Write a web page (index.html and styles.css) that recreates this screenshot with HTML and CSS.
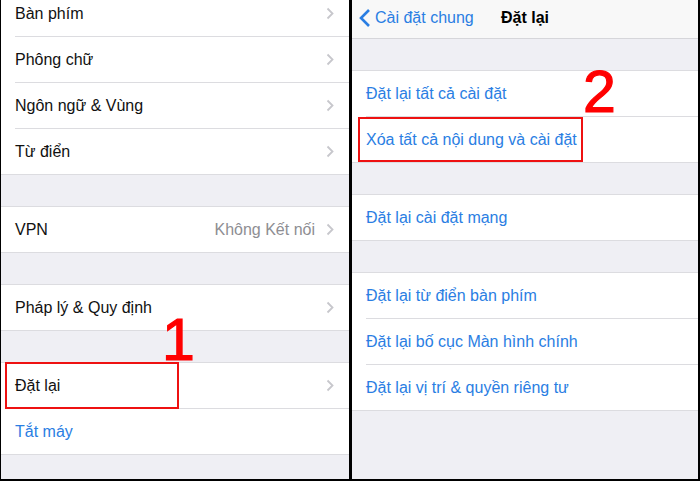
FILE: index.html
```html
<!DOCTYPE html>
<html lang="vi">
<head>
    <meta charset="UTF-8">
    <meta name="viewport" content="width=device-width, initial-scale=1.0">
    <title>Đặt lại</title>
    <link rel="stylesheet" href="styles.css">
</head>
<body>
    <div class="screens">
        <!-- Left screen: Cài đặt chung -->
        <div class="panel">
            <div class="group first">
                <div class="row"><div class="row-inner"><span>Bàn phím</span><svg class="chev" viewBox="0 0 8 13"><polyline points="1.5,1.5 6.5,6.5 1.5,11.5"/></svg></div></div>
                <div class="row"><div class="row-inner"><span>Phông chữ</span><svg class="chev" viewBox="0 0 8 13"><polyline points="1.5,1.5 6.5,6.5 1.5,11.5"/></svg></div></div>
                <div class="row"><div class="row-inner"><span>Ngôn ngữ &amp; Vùng</span><svg class="chev" viewBox="0 0 8 13"><polyline points="1.5,1.5 6.5,6.5 1.5,11.5"/></svg></div></div>
                <div class="row"><div class="row-inner"><span>Từ điển</span><svg class="chev" viewBox="0 0 8 13"><polyline points="1.5,1.5 6.5,6.5 1.5,11.5"/></svg></div></div>
            </div>

            <div class="group">
                <div class="row"><div class="row-inner"><span>VPN</span><span class="detail">Không Kết nối<svg class="chev" viewBox="0 0 8 13"><polyline points="1.5,1.5 6.5,6.5 1.5,11.5"/></svg></span></div></div>
            </div>

            <div class="group">
                <div class="row"><div class="row-inner"><span>Pháp lý &amp; Quy định</span><svg class="chev" viewBox="0 0 8 13"><polyline points="1.5,1.5 6.5,6.5 1.5,11.5"/></svg></div></div>
            </div>

            <div class="group">
                <div class="row"><div class="row-inner"><span>Đặt lại</span><svg class="chev" viewBox="0 0 8 13"><polyline points="1.5,1.5 6.5,6.5 1.5,11.5"/></svg></div></div>
                <div class="row"><div class="row-inner"><span class="blue">Tắt máy</span></div></div>
            </div>

            <div class="mark mark-1"></div>
            <div class="step step-1">1</div>
        </div>

        <!-- Right screen: Đặt lại -->
        <div class="panel">
            <div class="navbar">
                <a href="#" class="back">
                    <svg class="back-chev" viewBox="0 0 12 20"><polyline points="10,2 2,10 10,18"/></svg>
                    Cài đặt chung
                </a>
                <div class="title">Đặt lại</div>
                <div></div>
            </div>

            <div class="group">
                <div class="row"><div class="row-inner"><span class="blue">Đặt lại tất cả cài đặt</span></div></div>
                <div class="row"><div class="row-inner"><span class="blue">Xóa tất cả nội dung và cài đặt</span></div></div>
            </div>

            <div class="group">
                <div class="row"><div class="row-inner"><span class="blue">Đặt lại cài đặt mạng</span></div></div>
            </div>

            <div class="group">
                <div class="row"><div class="row-inner"><span class="blue">Đặt lại từ điển bàn phím</span></div></div>
                <div class="row"><div class="row-inner"><span class="blue">Đặt lại bố cục Màn hình chính</span></div></div>
                <div class="row"><div class="row-inner"><span class="blue">Đặt lại vị trí &amp; quyền riêng tư</span></div></div>
            </div>

            <div class="mark mark-2"></div>
            <div class="step step-2">2</div>
        </div>
    </div>
</body>
</html>
```

FILE: styles.css
```css
* {
    margin: 0;
    padding: 0;
    box-sizing: border-box;
    font-family: 'Liberation Sans', Arial, sans-serif;
}

body {
    background: #000;
    width: 700px;
    height: 481px;
    overflow: hidden;
}

.screens {
    display: flex;
    gap: 3px;
    padding-left: 1px;
}

.panel {
    position: relative;
    height: 479px;
    overflow: hidden;
    background: #efeff4;
    flex: 0 0 348px;
}

.panel + .panel {
    flex-basis: 346px;
}

.navbar {
    height: 39px;
    padding-bottom: 2px;
    background: #f8f8f8;
    border-bottom: 1px solid #d6d6da;
    display: grid;
    grid-template-columns: 1fr auto 1fr;
    align-items: center;
    font-size: 16px;
}

.back {
    display: flex;
    align-items: center;
    gap: 4px;
    padding-left: 7px;
    color: #2a7ee3;
    text-decoration: none;
}

.back-chev {
    width: 12px;
    height: 20px;
    fill: none;
    stroke: #2a7ee3;
    stroke-width: 2.6;
}

.title {
    font-weight: 700;
    color: #000;
}

.group {
    background: #fff;
    border-top: 1px solid #dcdce0;
    border-bottom: 1px solid #dcdce0;
    margin-top: 31px;
}

.group.first {
    margin-top: -9px;
    border-top: none;
}

.row {
    padding-left: 14px;
}

.row-inner {
    height: 46px;
    display: flex;
    align-items: center;
    justify-content: space-between;
    padding-right: 15px;
    border-bottom: 1px solid #dcdce0;
    font-size: 16px;
    color: #111;
}

.row:last-child .row-inner {
    height: 45px;
    border-bottom: none;
}

.blue {
    color: #2a7ee3;
}

.detail {
    display: flex;
    align-items: center;
    gap: 11px;
    color: #8e8e93;
}

.chev {
    width: 8px;
    height: 13px;
    fill: none;
    stroke: #c7c7cc;
    stroke-width: 1.8;
}

/* red annotations */
.mark {
    position: absolute;
    border: 2px solid #ee1111;
}

.mark-1 {
    left: 4px;
    top: 362px;
    width: 174px;
    height: 47px;
}

.mark-2 {
    left: 6px;
    top: 117px;
    width: 225px;
    height: 45px;
}

.step {
    position: absolute;
    font-size: 59px;
    line-height: 59px;
    color: #f00;
    -webkit-text-stroke: 1.2px #f00;
}

.step-1 {
    left: 161px;
    top: 311px;
}

.step-2 {
    left: 231px;
    top: 63px;
}
```
